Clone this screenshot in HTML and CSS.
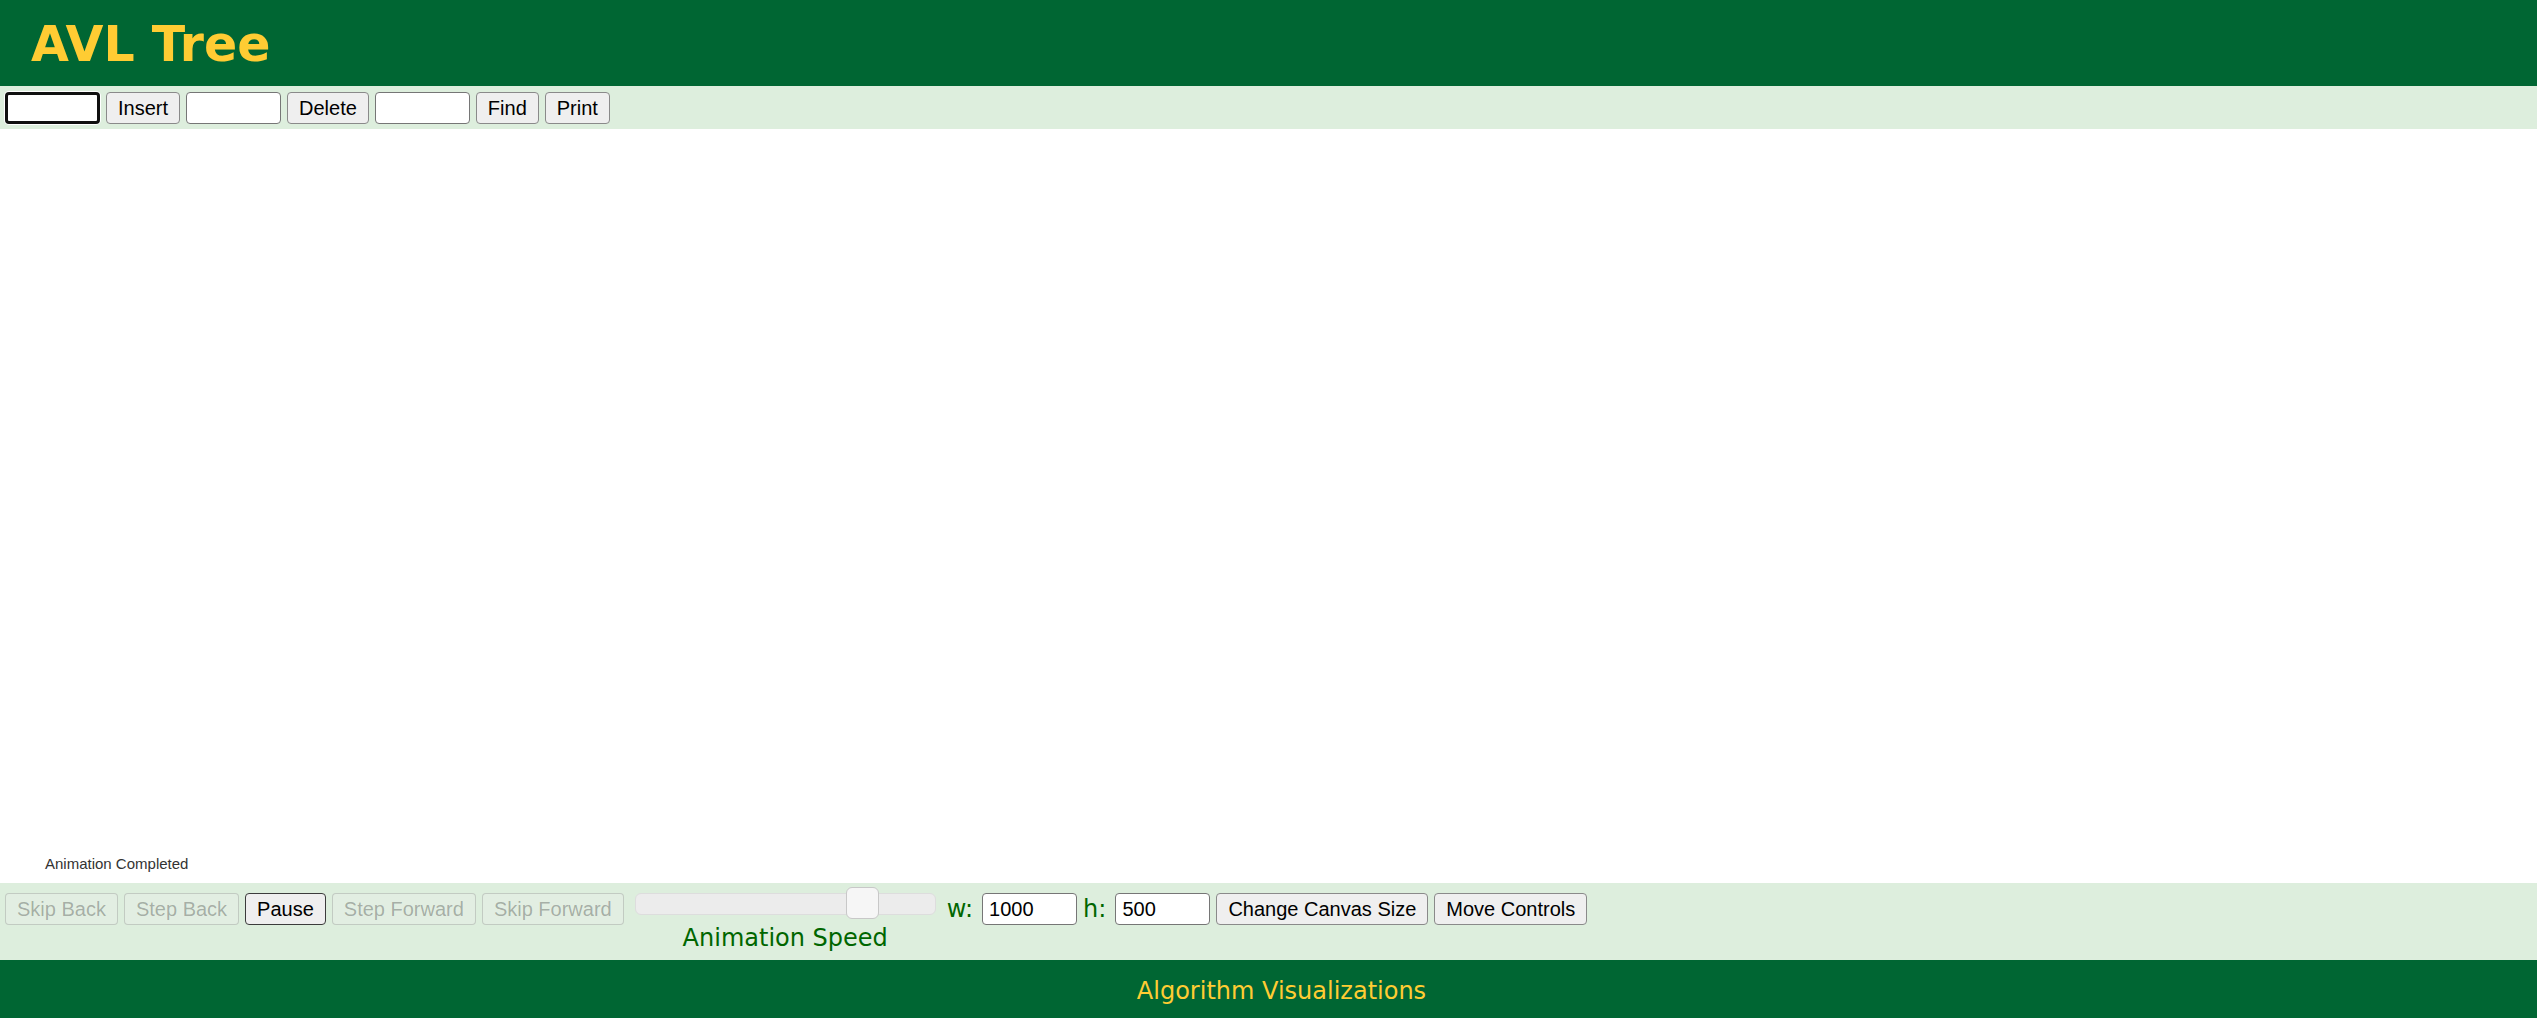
FILE: index.html
```html
<!DOCTYPE html>
<html lang="en">
<head>
<meta charset="utf-8">
<title>AVL Tree</title>
<link rel="stylesheet" href="styles.css">
</head>
<body>
<header class="header">
  <h1 class="title">AVL Tree</h1>
</header>
<div class="toolbar top-bar">
  <input class="field focused" type="text">
  <button class="btn">Insert</button>
  <input class="field" type="text">
  <button class="btn">Delete</button>
  <input class="field" type="text">
  <button class="btn">Find</button>
  <button class="btn">Print</button>
</div>
<main class="canvas">
  <div class="status">Animation Completed</div>
</main>
<div class="toolbar bottom-bar">
  <button class="btn" disabled>Skip Back</button>
  <button class="btn" disabled>Step Back</button>
  <button class="btn strong">Pause</button>
  <button class="btn" disabled>Step Forward</button>
  <button class="btn" disabled>Skip Forward</button>
  <div class="speed">
    <div class="slider">
      <div class="track"></div>
      <div class="thumb"></div>
    </div>
    <div class="speed-label">Animation Speed</div>
  </div>
  <span class="dim-label">w:</span>
  <input class="field" type="text" value="1000">
  <span class="dim-label">h:</span>
  <input class="field" type="text" value="500">
  <button class="btn">Change Canvas Size</button>
  <button class="btn">Move Controls</button>
</div>
<footer class="footer">Algorithm Visualizations</footer>
</body>
</html>
```
FILE: styles.css
```css
html, body {
  margin: 0;
  padding: 0;
  background: #ffffff;
  font-family: "DejaVu Sans", Verdana, sans-serif;
}

.header {
  background: #006633;
  height: 86px;
  box-sizing: border-box;
  padding: 20px 0 0 31px;
}

.title {
  margin: 0;
  font-family: "DejaVu Sans", Verdana, sans-serif;
  font-weight: bold;
  font-size: 49px;
  line-height: 49px;
  color: #ffcc33;
}

.toolbar {
  background: #ddeedd;
  display: flex;
  align-items: flex-start;
  gap: 6px;
  box-sizing: border-box;
}

.top-bar {
  height: 43px;
  padding: 6px 0 0 5px;
}

.bottom-bar {
  height: 77px;
  padding: 10px 0 0 5px;
}

.btn {
  font-family: "Liberation Sans", Arial, sans-serif;
  font-size: 20px;
  height: 32px;
  box-sizing: border-box;
  padding: 0 11px;
  margin: 0;
  border: 1px solid #8a8a8a;
  border-radius: 4px;
  background: #efefef;
  color: #000000;
  white-space: nowrap;
}

.btn.strong {
  border-color: #3c3c3c;
}

.btn:disabled {
  background: rgba(239, 239, 239, 0.3);
  border-color: rgba(118, 118, 118, 0.3);
  color: rgba(16, 16, 16, 0.3);
}

.field {
  font-family: "Liberation Sans", Arial, sans-serif;
  font-size: 20px;
  width: 95px;
  height: 32px;
  box-sizing: border-box;
  padding: 0 6px;
  margin: 0;
  border: 1px solid #767676;
  border-radius: 4px;
  background: #ffffff;
  color: #000000;
}

.field.focused {
  border: 3px solid #101010;
  box-shadow: 0 0 0 1px #ffffff;
}

.canvas {
  height: 754px;
  display: flex;
  flex-direction: column;
  justify-content: flex-end;
  padding: 0 0 11px 45px;
  box-sizing: border-box;
}

.status {
  font-family: "Liberation Sans", Arial, sans-serif;
  font-size: 15px;
  line-height: 17px;
  color: #333333;
}

.speed {
  display: flex;
  flex-direction: column;
  align-items: center;
  margin: -6px 5px 0 5px;
}

.slider {
  position: relative;
  width: 301px;
  height: 31px;
}

.track {
  position: absolute;
  left: 0;
  right: 0;
  top: 6px;
  height: 22px;
  box-sizing: border-box;
  background: #ececec;
  border: 1px solid #dddddd;
  border-radius: 6px;
}

.thumb {
  position: absolute;
  left: 211px;
  top: 0;
  width: 33px;
  height: 32px;
  box-sizing: border-box;
  background: #f6f6f6;
  border: 1px solid #c8c8c8;
  border-radius: 6px;
}

.speed-label {
  margin-top: 3px;
  font-size: 24px;
  line-height: 34px;
  color: #006600;
}

.dim-label {
  font-size: 24px;
  line-height: 32px;
  color: #006600;
  margin-right: 3px;
}

.footer {
  background: #006633;
  color: #ffcc33;
  font-size: 24px;
  line-height: 28px;
  height: 58px;
  box-sizing: border-box;
  padding: 17px 0 0 26px;
  text-align: center;
}
```
